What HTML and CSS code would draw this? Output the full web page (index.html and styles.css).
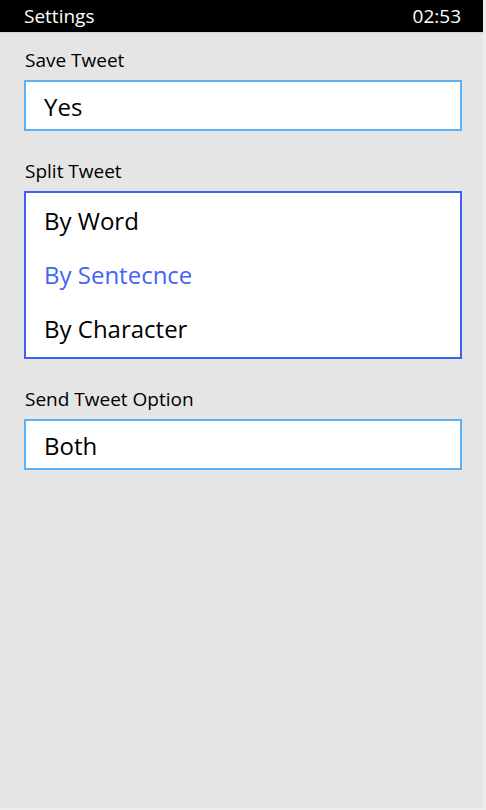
FILE: index.html
```html
<!DOCTYPE html>
<html lang="en">
<head>
<meta charset="utf-8">
<title>Settings</title>
<link rel="stylesheet" href="styles.css">
</head>
<body>
<div class="screen">
  <header class="statusbar">
    <span class="title">Settings</span>
    <span class="clock">02:53</span>
  </header>
  <main class="content">
    <section class="field">
      <div class="label">Save Tweet</div>
      <div class="box box-light"><span class="value">Yes</span></div>
    </section>
    <section class="field">
      <div class="label">Split Tweet</div>
      <div class="box box-list">
        <div class="item">By Word</div>
        <div class="item item-selected">By Sentecnce</div>
        <div class="item">By Character</div>
      </div>
    </section>
    <section class="field">
      <div class="label">Send Tweet Option</div>
      <div class="box box-light"><span class="value">Both</span></div>
    </section>
  </main>
</div>
</body>
</html>
```
FILE: styles.css
```css
* { box-sizing: border-box; }
html, body {
  margin: 0;
  padding: 0;
  height: 100%;
}
body {
  background: #e5e5e5;
  font-family: "Open Sans", "Noto Sans", sans-serif;
  color: #000;
}
.screen {
  height: 810px;
  display: flex;
  flex-direction: column;
  border-right: 3px solid #ededed;
  border-bottom: 2px solid #ededed;
}
.statusbar {
  height: 33px;
  background: #000;
  color: #fff;
  display: flex;
  justify-content: space-between;
  align-items: center;
  padding: 0 22px 1px 24px;
  font-size: 19px;
  border-bottom: 1px solid #d4d4d4;
}
.content {
  flex: 1;
  padding: 15px 21px 0 24px;
}
.field {
  margin-bottom: 28px;
}
.label {
  font-size: 19px;
  line-height: 24px;
  margin-bottom: 8px;
  padding-left: 1px;
}
.box {
  background: #fff;
  border: 2px solid #5cb0f4;
}
.box-light {
  height: 51px;
  display: flex;
  align-items: center;
  padding: 2px 0 0 18px;
}
.value {
  font-size: 24px;
  line-height: 30px;
}
.box-list {
  border-color: #3f60f4;
  padding: 0 0 0 18px;
  height: 168px;
}
.item {
  height: 54px;
  display: flex;
  align-items: center;
  font-size: 24px;
}
.item-selected {
  color: #4166f2;
}
```
